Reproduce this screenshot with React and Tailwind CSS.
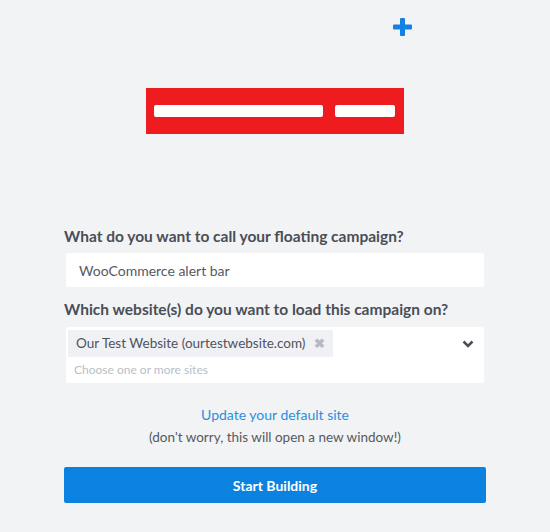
function App() {
  return (
    <div className="min-h-[532px] w-[550px] bg-[#f2f3f5] font-['Lato',sans-serif] text-[#4b4f58]">
      <div className="pt-[18px] pl-[393px]">
        <svg width="19" height="18" viewBox="0 0 19 18">
          <rect x="7" y="0" width="5" height="18" rx="1" fill="#1281e2" />
          <rect x="0" y="6.5" width="19" height="5" rx="1" fill="#1281e2" />
        </svg>
      </div>
      <div className="ml-[146px] mt-[52px] flex h-[46px] w-[258px] items-center gap-[12px] bg-[#ee1c1f] px-[8px]">
        <div className="h-[12px] w-[169px] rounded-[2px] bg-white" />
        <div className="h-[12px] w-[60px] rounded-[2px] bg-white" />
      </div>
      <div className="mx-[64px] mt-[92px] flex flex-col">
        <label className="text-[15.5px] font-bold leading-[20px] text-[#4a4e57]">
          What do you want to call your floating campaign?
        </label>
        <div className="mx-[2px] mt-[7px] flex h-[34px] items-center rounded-[2px] bg-white pl-[13px] text-[14px] text-[#555a63]">
          WooCommerce alert bar
        </div>
        <label className="mt-[12px] text-[15.5px] font-bold leading-[20px] text-[#4a4e57]">
          Which website(s) do you want to load this campaign on?
        </label>
        <div className="mx-[2px] mt-[8px] flex h-[56px] rounded-[2px] bg-white pl-[2px] pt-[3px] pr-[10px]">
          <div className="flex flex-1 flex-col items-start">
            <div className="flex h-[27px] items-center whitespace-nowrap bg-[#f0f1f4] pl-[8px] pr-[8px] text-[13.5px] text-[#4f535c]">
              <span>Our Test Website (ourtestwebsite.com)</span>
              <span className="ml-[9px] text-[13px] font-bold text-[#b4b9c2]">✖</span>
            </div>
            <div className="mt-[6px] pl-[6px] text-[12px] leading-[14px] text-[#b9bec7]">
              Choose one or more sites
            </div>
          </div>
          <svg className="mt-[10px]" width="12" height="8" viewBox="0 0 12 8">
            <path d="M1.5 1.5 L6 6 L10.5 1.5" stroke="#4a4e57" strokeWidth="2.5" fill="none" />
          </svg>
        </div>
        <div className="mt-[23px] text-center text-[14px] leading-[18px] text-[#2a8fdc]">
          Update your default site
        </div>
        <div className="mt-[4px] text-center text-[13.5px] leading-[18px] text-[#55595f]">
          (don't worry, this will open a new window!)
        </div>
        <button className="mt-[21px] h-[36px] w-full rounded-[2px] bg-[#0b82e0] text-[14px] font-bold text-white">
          Start Building
        </button>
      </div>
    </div>
  );
}

export default App;
